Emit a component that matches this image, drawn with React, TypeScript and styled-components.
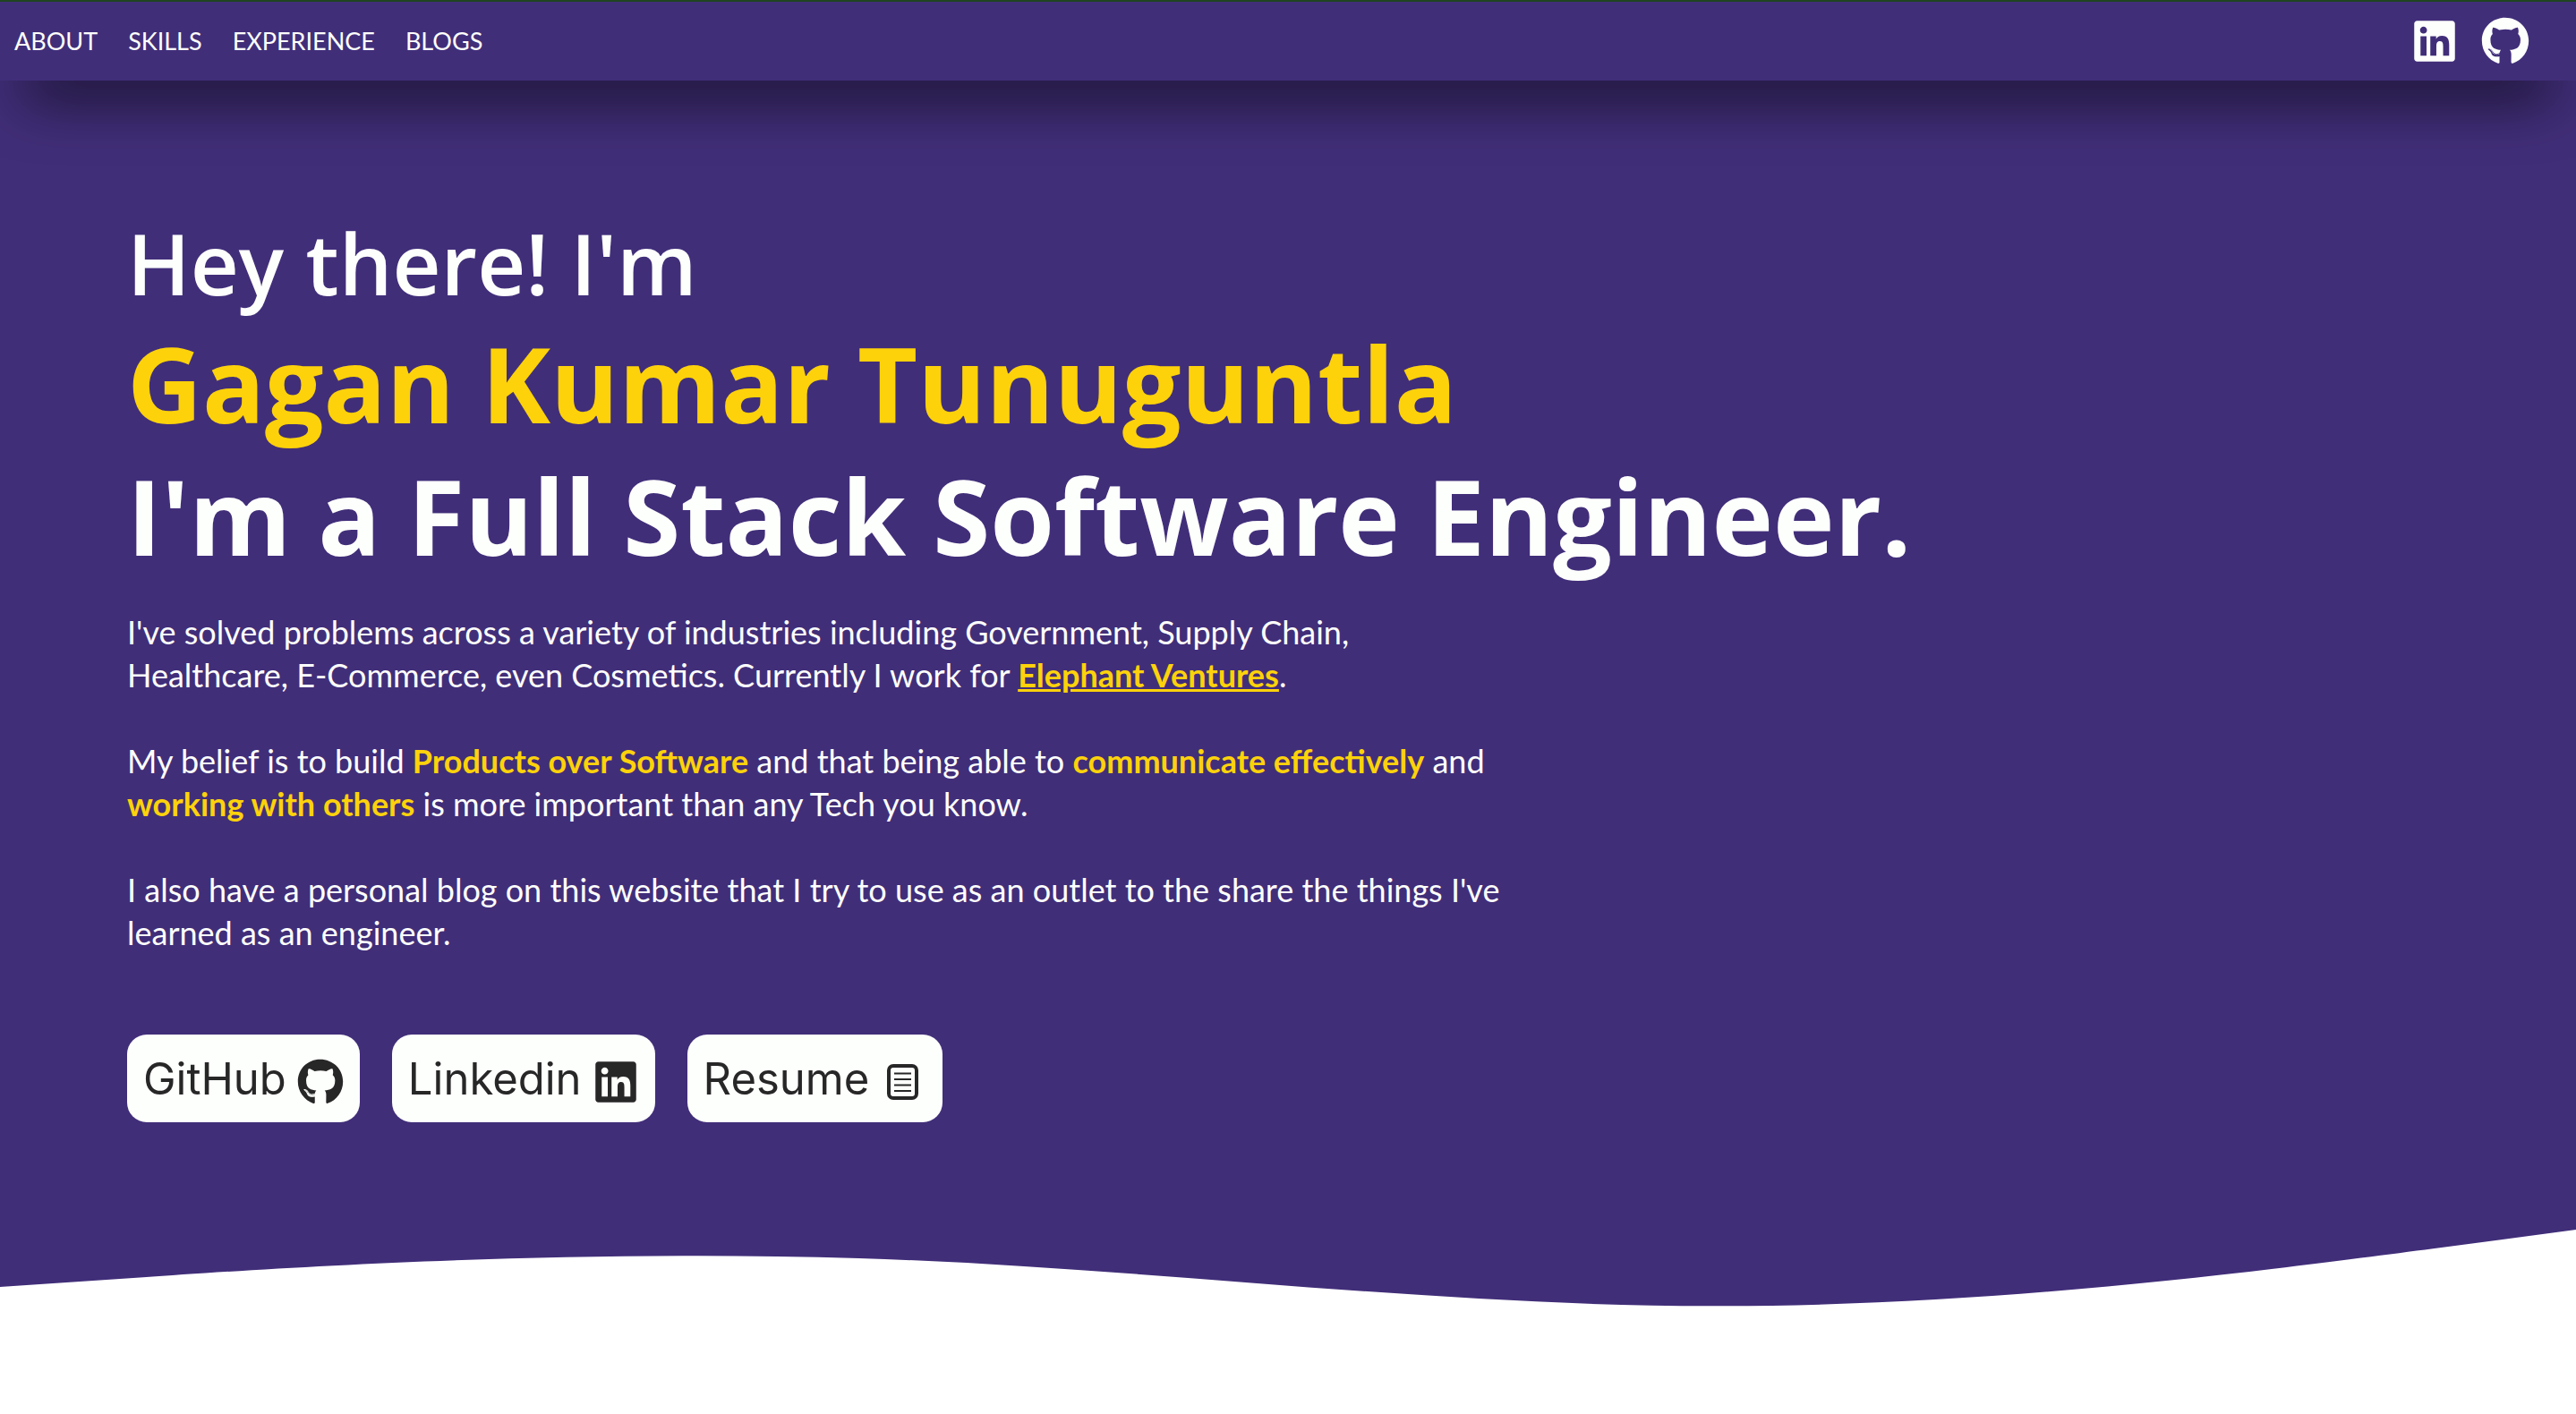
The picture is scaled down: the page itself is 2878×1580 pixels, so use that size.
import React from "react";
import styled, { createGlobalStyle } from "styled-components";
import { FaGithub, FaLinkedin } from "react-icons/fa";

const colors = { purple: "#412e79", gold: "#fdd20a", paper: "#fdfffc", ink: "#272727" };

const GlobalStyle = createGlobalStyle`
  *, *::before, *::after { box-sizing: border-box; }
  body { margin: 0; background: #fff; color: ${colors.paper}; font-family: "Open Sans", "Noto Sans", sans-serif; }
  h1, h2, p, ul { margin: 0; padding: 0; }
  a { color: inherit; text-decoration: none; }
`;

const Header = styled.header`
  position: relative;
  display: flex;
  align-items: center;
  justify-content: space-between;
  height: 90px;
  padding: 0 52px 0 16px;
  border-top: 2px solid #1f4420;
  background: ${colors.purple};
  box-shadow: 0 44px 64px -26px rgba(0, 0, 0, 0.8);
`;

const NavList = styled.ul`
  display: flex;
  gap: 34px;
  list-style: none;
  font-family: Lato, "Open Sans", sans-serif;
  font-size: 27px;
  line-height: 36px;
`;

const Social = styled.div`
  display: flex;
  align-items: center;
  gap: 26px;
  a { display: flex; }
`;

const Hero = styled.main`
  padding: 144px 142px 56px;
  background: ${colors.purple};
`;

const Greeting = styled.p`
  font-size: 94px;
  font-weight: 600;
  line-height: 120px;
`;

const Headline = styled.h1<{ $gold?: boolean }>`
  font-size: 116px;
  font-weight: 700;
  line-height: 148px;
  color: ${(p) => (p.$gold ? colors.gold : colors.paper)};
`;

const Bio = styled.div`
  display: grid;
  gap: 48px;
  margin-top: 32px;
  font-family: Lato, "Open Sans", sans-serif;
  font-size: 36px;
  line-height: 48px;
  strong, a { color: ${colors.gold}; font-weight: 700; }
  a { text-decoration: underline; }
`;

const Actions = styled.div`
  display: flex;
  gap: 36px;
  margin-top: 90px;
`;

const ActionLink = styled.a`
  display: flex;
  align-items: center;
  gap: 12px;
  height: 98px;
  padding: 0 18px;
  border-radius: 22px;
  background: ${colors.paper};
  color: ${colors.ink};
  font-family: Inter, "Liberation Sans", sans-serif;
  font-size: 49px;
  svg { margin-top: 8px; }
`;

const Wave = styled.svg`
  display: block;
  width: 100%;
`;

const ResumeIcon = () => (
  <svg width="52" height="52" viewBox="0 0 52 52" fill="none" stroke="currentColor" aria-hidden="true">
    <rect x="10" y="8" width="31" height="36" rx="5" strokeWidth="4" />
    <path d="M16 16.5h19M16 23h19M16 29.5h19M16 36h19" strokeWidth="2" />
  </svg>
);

const links = ["About", "Skills", "Experience", "Blogs"];

export default function App() {
  return (
    <>
      <GlobalStyle />
      <Header>
        <nav>
          <NavList>
            {links.map((l) => (
              <li key={l}><a href={`#${l.toLowerCase()}`}>{l.toUpperCase()}</a></li>
            ))}
          </NavList>
        </nav>
        <Social>
          <a href="#linkedin" aria-label="LinkedIn"><FaLinkedin size={52} /></a>
          <a href="#github" aria-label="GitHub"><FaGithub size={54} /></a>
        </Social>
      </Header>
      <Hero>
        <Greeting>Hey there! I'm</Greeting>
        <Headline $gold>Gagan Kumar Tunuguntla</Headline>
        <Headline as="h2">I'm a Full Stack Software Engineer.</Headline>
        <Bio>
          <p>
            I've solved problems across a variety of industries including Government, Supply Chain,<br />
            Healthcare, E-Commerce, even Cosmetics. Currently I work for <a href="#elephant">Elephant Ventures</a>.
          </p>
          <p>
            My belief is to build <strong>Products over Software</strong> and that being able to <strong>communicate effectively</strong> and<br />
            <strong>working with others</strong> is more important than any Tech you know.
          </p>
          <p>
            I also have a personal blog on this website that I try to use as an outlet to the share the things I've<br />
            learned as an engineer.
          </p>
        </Bio>
        <Actions>
          <ActionLink href="#github">GitHub <FaGithub size={52} /></ActionLink>
          <ActionLink href="#linkedin">Linkedin <FaLinkedin size={52} /></ActionLink>
          <ActionLink href="#resume">Resume <ResumeIcon /></ActionLink>
        </Actions>
      </Hero>
      <Wave viewBox="0 0 1440 96" preserveAspectRatio="none" aria-hidden="true">
        <path
          fill={colors.purple}
          d="M-2,64H0L80,58.7C160,53,320,43,480,48C640,53,800,75,960,74.7C1120,75,1280,53,1360,42.7L1440,32H1442V-1H-2Z"
        />
      </Wave>
    </>
  );
}
